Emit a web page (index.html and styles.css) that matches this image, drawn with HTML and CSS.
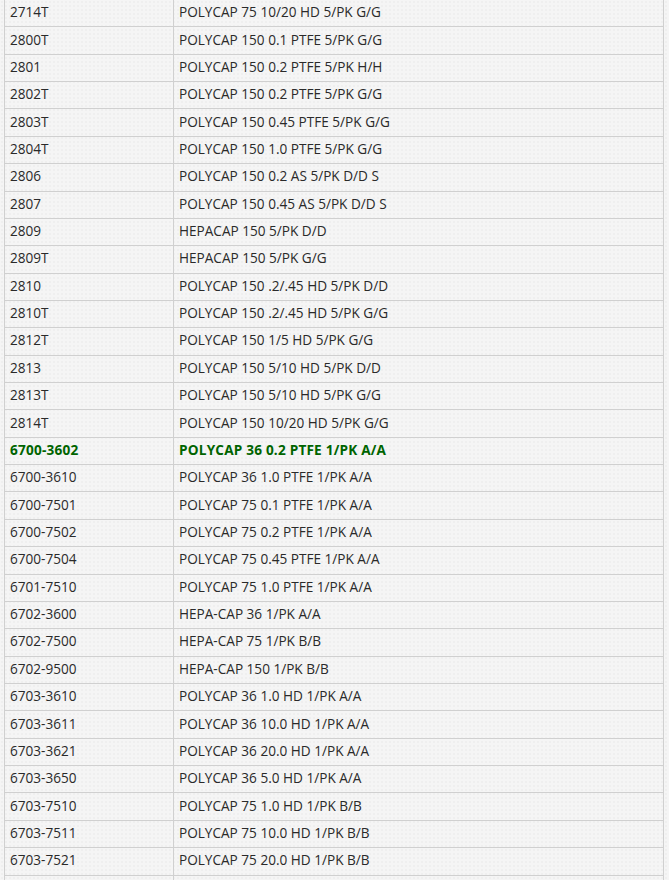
FILE: index.html
```html
<!DOCTYPE html>
<html>
<head>
<meta charset="utf-8">
<link rel="stylesheet" href="styles.css">
</head>
<body>
<table class="parts">
<tbody>
<tr><td>2714T</td><td>POLYCAP 75 10/20 HD 5/PK G/G</td></tr>
<tr><td>2800T</td><td>POLYCAP 150 0.1 PTFE 5/PK G/G</td></tr>
<tr><td>2801</td><td>POLYCAP 150 0.2 PTFE 5/PK H/H</td></tr>
<tr><td>2802T</td><td>POLYCAP 150 0.2 PTFE 5/PK G/G</td></tr>
<tr><td>2803T</td><td>POLYCAP 150 0.45 PTFE 5/PK G/G</td></tr>
<tr><td>2804T</td><td>POLYCAP 150 1.0 PTFE 5/PK G/G</td></tr>
<tr><td>2806</td><td>POLYCAP 150 0.2 AS 5/PK D/D S</td></tr>
<tr><td>2807</td><td>POLYCAP 150 0.45 AS 5/PK D/D S</td></tr>
<tr><td>2809</td><td>HEPACAP 150 5/PK D/D</td></tr>
<tr><td>2809T</td><td>HEPACAP 150 5/PK G/G</td></tr>
<tr><td>2810</td><td>POLYCAP 150 .2/.45 HD 5/PK D/D</td></tr>
<tr><td>2810T</td><td>POLYCAP 150 .2/.45 HD 5/PK G/G</td></tr>
<tr><td>2812T</td><td>POLYCAP 150 1/5 HD 5/PK G/G</td></tr>
<tr><td>2813</td><td>POLYCAP 150 5/10 HD 5/PK D/D</td></tr>
<tr><td>2813T</td><td>POLYCAP 150 5/10 HD 5/PK G/G</td></tr>
<tr><td>2814T</td><td>POLYCAP 150 10/20 HD 5/PK G/G</td></tr>
<tr class="hl"><td>6700-3602</td><td>POLYCAP 36 0.2 PTFE 1/PK A/A</td></tr>
<tr><td>6700-3610</td><td>POLYCAP 36 1.0 PTFE 1/PK A/A</td></tr>
<tr><td>6700-7501</td><td>POLYCAP 75 0.1 PTFE 1/PK A/A</td></tr>
<tr><td>6700-7502</td><td>POLYCAP 75 0.2 PTFE 1/PK A/A</td></tr>
<tr><td>6700-7504</td><td>POLYCAP 75 0.45 PTFE 1/PK A/A</td></tr>
<tr><td>6701-7510</td><td>POLYCAP 75 1.0 PTFE 1/PK A/A</td></tr>
<tr><td>6702-3600</td><td>HEPA-CAP 36 1/PK A/A</td></tr>
<tr><td>6702-7500</td><td>HEPA-CAP 75 1/PK B/B</td></tr>
<tr><td>6702-9500</td><td>HEPA-CAP 150 1/PK B/B</td></tr>
<tr><td>6703-3610</td><td>POLYCAP 36 1.0 HD 1/PK A/A</td></tr>
<tr><td>6703-3611</td><td>POLYCAP 36 10.0 HD 1/PK A/A</td></tr>
<tr><td>6703-3621</td><td>POLYCAP 36 20.0 HD 1/PK A/A</td></tr>
<tr><td>6703-3650</td><td>POLYCAP 36 5.0 HD 1/PK A/A</td></tr>
<tr><td>6703-7510</td><td>POLYCAP 75 1.0 HD 1/PK B/B</td></tr>
<tr><td>6703-7511</td><td>POLYCAP 75 10.0 HD 1/PK B/B</td></tr>
<tr><td>6703-7521</td><td>POLYCAP 75 20.0 HD 1/PK B/B</td></tr>
<tr><td></td><td></td></tr>
</tbody>
</table>
</body>
</html>
```

FILE: styles.css
```css
html, body {
  margin: 0;
  padding: 0;
}
body {
  background-color: #f5f5f5;
  background-image: radial-gradient(circle, #efefef 1px, transparent 1.2px);
  background-size: 4px 4px;
  font-family: "Open Sans", "Noto Sans", sans-serif;
  font-size: 13.6px;
  color: #2a2a2a;
  overflow: hidden;
  height: 880px;
}
.parts {
  border-collapse: collapse;
  margin: -1px 0 0 4px;
  width: 660px;
}
.parts tr {
  height: 27.37px;
}
.parts td {
  border: 1px solid #d0d0d0;
  padding: 0 0 2px 5px;
  vertical-align: middle;
  line-height: 16px;
}
.parts td:first-child {
  width: 163px;
}
.parts tr.hl td {
  color: #006400;
  font-weight: bold;
  letter-spacing: 0.2px;
}
```
